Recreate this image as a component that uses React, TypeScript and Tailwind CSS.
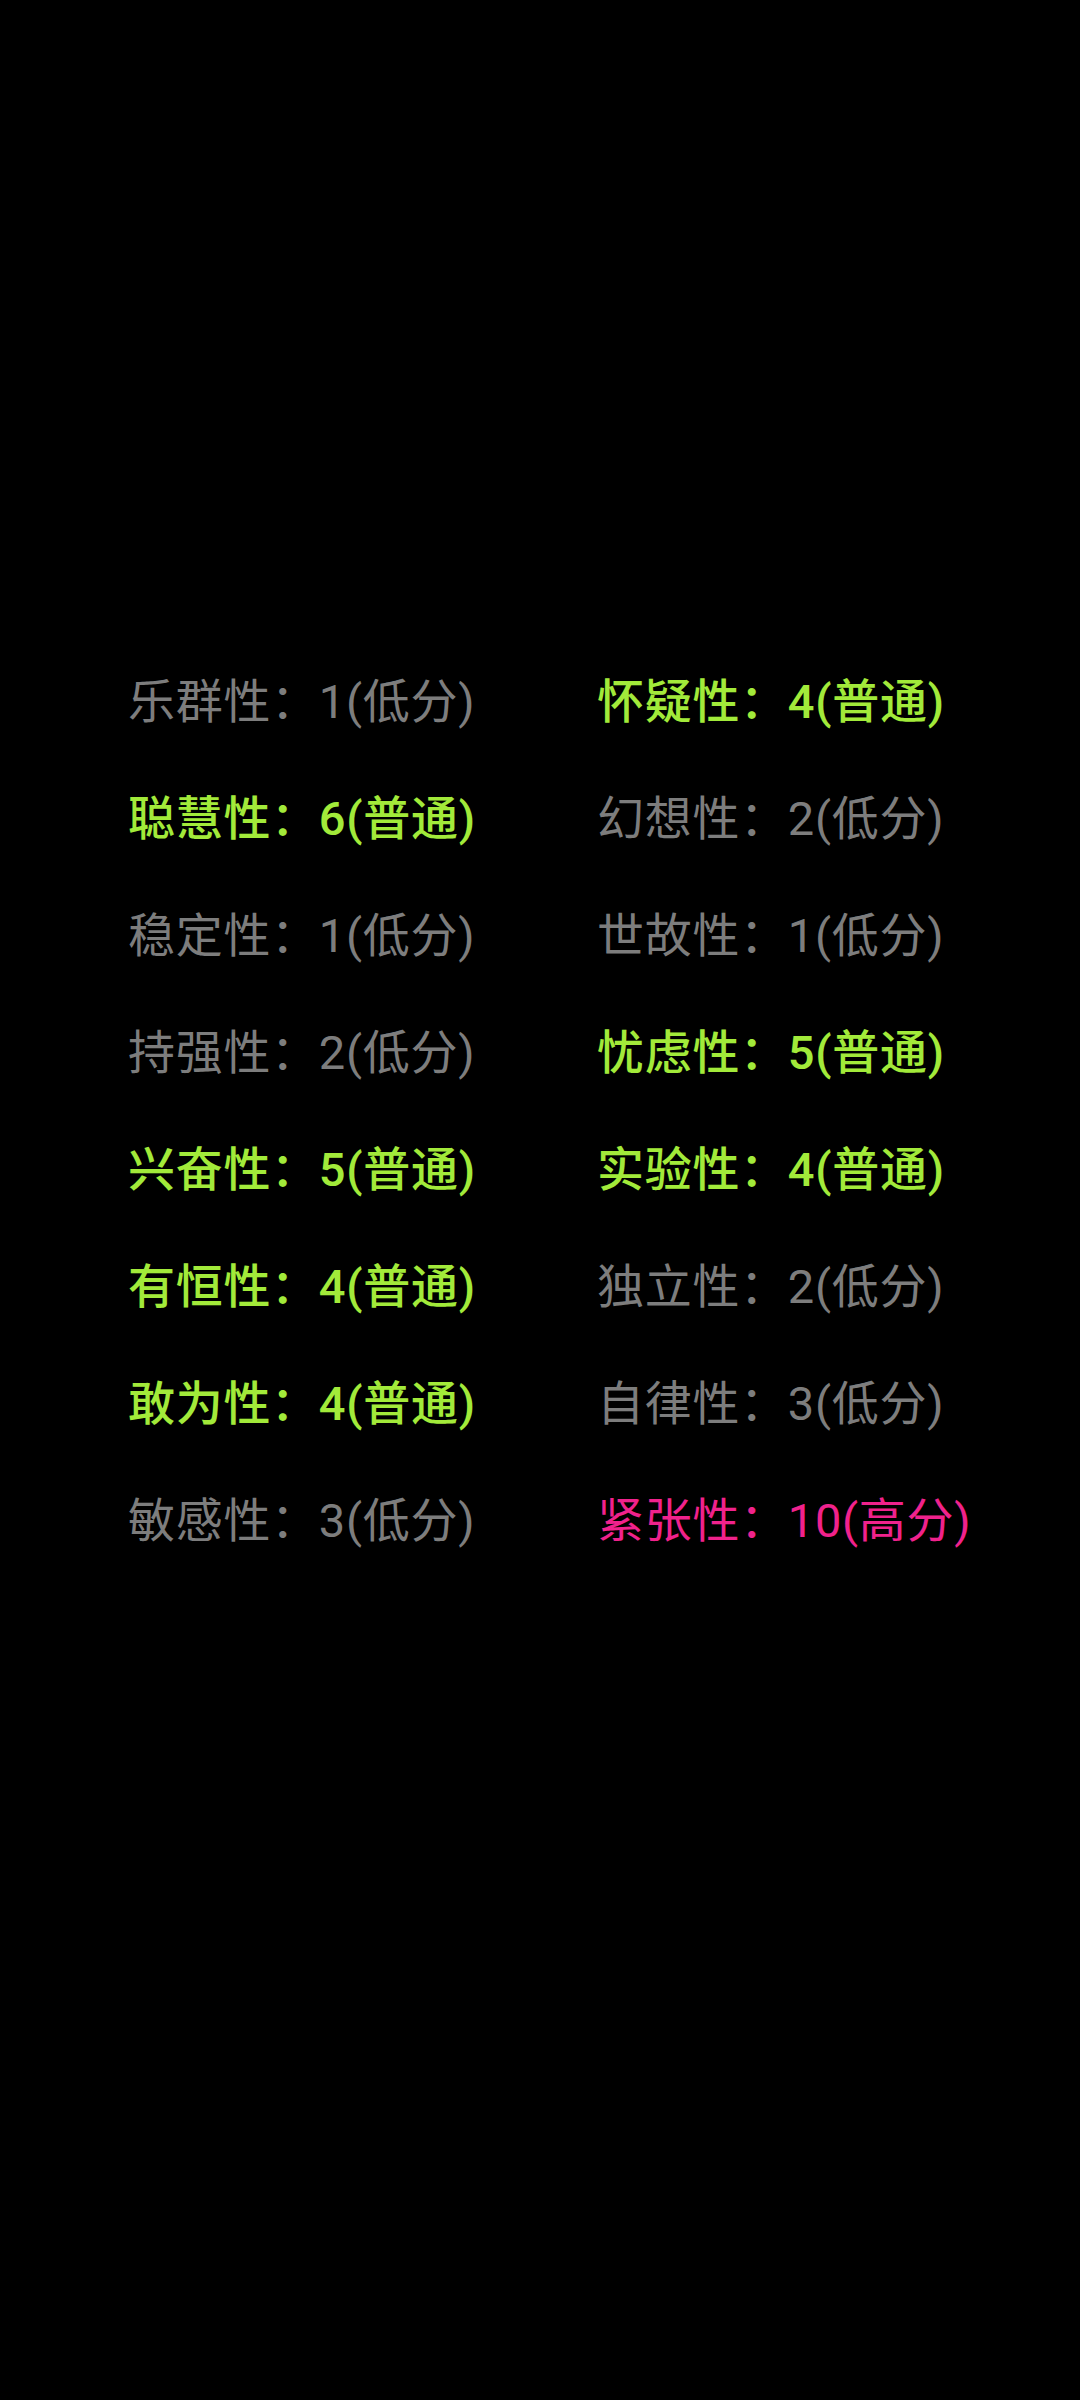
const GRAY = "text-[#7d7d7d] font-normal";
const GREEN = "text-[#a2ea3a] font-medium";
const PINK = "text-[#f0228c] font-normal";

type Item = { name: string; score: number; level: "低分" | "普通" | "高分" };

const rows: [Item, Item][] = [
  [{ name: "乐群性", score: 1, level: "低分" }, { name: "怀疑性", score: 4, level: "普通" }],
  [{ name: "聪慧性", score: 6, level: "普通" }, { name: "幻想性", score: 2, level: "低分" }],
  [{ name: "稳定性", score: 1, level: "低分" }, { name: "世故性", score: 1, level: "低分" }],
  [{ name: "持强性", score: 2, level: "低分" }, { name: "忧虑性", score: 5, level: "普通" }],
  [{ name: "兴奋性", score: 5, level: "普通" }, { name: "实验性", score: 4, level: "普通" }],
  [{ name: "有恒性", score: 4, level: "普通" }, { name: "独立性", score: 2, level: "低分" }],
  [{ name: "敢为性", score: 4, level: "普通" }, { name: "自律性", score: 3, level: "低分" }],
  [{ name: "敏感性", score: 3, level: "低分" }, { name: "紧张性", score: 10, level: "高分" }],
];

function Cell({ item }: { item: Item }) {
  const color = item.level === "普通" ? GREEN : item.level === "高分" ? PINK : GRAY;
  return (
    <div className={`h-[117px] flex items-center whitespace-nowrap text-[47px] tracking-[0.7px] ${color}`}>
      {item.name}：{item.score}({item.level})
    </div>
  );
}

export default function App() {
  return (
    <div
      className="w-[1080px] h-[2400px] bg-black pt-[644px] pl-[128px]"
      style={{ fontFamily: "Roboto, 'Noto Sans CJK SC', sans-serif" }}
    >
      <div className="grid grid-cols-[469px_1fr]">
        {rows.map(([a, b]) => (
          <>
            <Cell key={a.name} item={a} />
            <Cell key={b.name} item={b} />
          </>
        ))}
      </div>
    </div>
  );
}
